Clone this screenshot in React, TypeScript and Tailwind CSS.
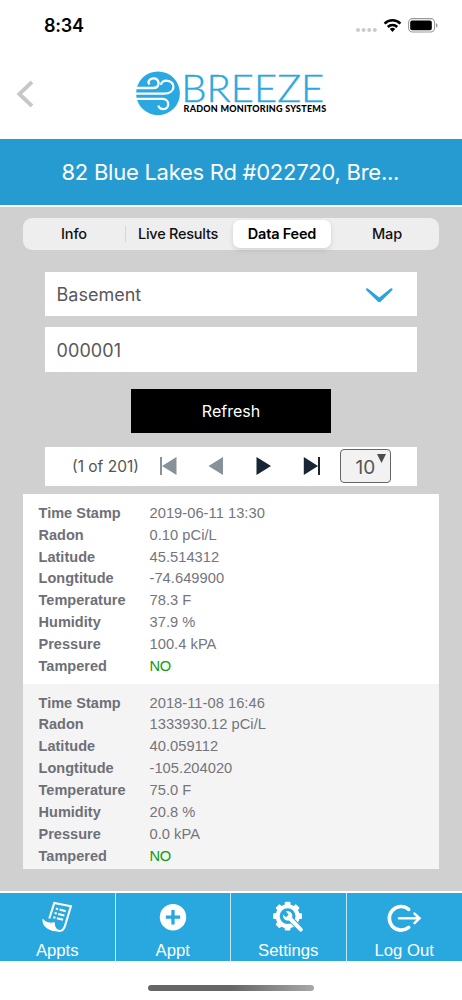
import React from "react";

type Reading = { label: string; value: string }[];

const row = (label: string, value: string) => ({ label, value });

const first: Reading = [
  row("Time Stamp", "2019-06-11 13:30"),
  row("Radon", "0.10 pCi/L"),
  row("Latitude", "45.514312"),
  row("Longtitude", "-74.649900"),
  row("Temperature", "78.3 F"),
  row("Humidity", "37.9 %"),
  row("Pressure", "100.4 kPA"),
  row("Tampered", "NO"),
];

const second: Reading = [
  row("Time Stamp", "2018-11-08 16:46"),
  row("Radon", "1333930.12 pCi/L"),
  row("Latitude", "40.059112"),
  row("Longtitude", "-105.204020"),
  row("Temperature", "75.0 F"),
  row("Humidity", "20.8 %"),
  row("Pressure", "0.0 kPA"),
  row("Tampered", "NO"),
];

function ReadingBlock({ rows, className }: { rows: Reading; className: string }) {
  return (
    <dl className={`pl-[15.5px] font-['Liberation_Sans',sans-serif] text-[14.7px] leading-[21.9px] text-[#74757c] ${className}`}>
      {rows.map((r) => (
        <div key={r.label} className="flex h-[21.9px]">
          <dt className="w-[111px] text-[14.5px] font-bold tracking-[0.03px] text-[#6e6f77]">{r.label}</dt>
          <dd className={r.value === "NO" ? "tracking-[-0.3px] text-[#0a9d0a]" : "tracking-[0.03px]"}>{r.value}</dd>
        </div>
      ))}
    </dl>
  );
}

function StatusBar() {
  return (
    <div className="flex h-[52px] justify-between pl-[44px] pr-[24px]">
      <span className="pt-[13px] text-[18px] font-semibold leading-[25px] tracking-[-0.25px] text-black">8:34</span>
      <svg className="mt-[16px] h-[18px] w-[84px]" viewBox="354 16 84 18">
        <g fill="#cbcbcd">
          <circle cx="358" cy="30" r="2" />
          <circle cx="363.6" cy="30" r="2" />
          <circle cx="369.2" cy="30" r="2" />
          <circle cx="374.8" cy="30" r="2" />
        </g>
        <g fill="none" stroke="#000" strokeWidth="2.6">
          <path d="M384.6 23.6a11 11 0 0 1 15.8 0" />
          <path d="M387.8 27a6.6 6.6 0 0 1 9.4 0" />
        </g>
        <path d="M389.8 29.1a4 4 0 0 1 5.4 0l-2.7 2.8z" />
        <rect x="408.6" y="18.6" width="26" height="13.4" rx="4" fill="none" stroke="#9a9a9a" strokeWidth="1.1" />
        <rect x="410.2" y="20.6" width="21.6" height="9.6" rx="2" />
        <path d="M436 23.2c2 .6 2 3.8 0 4.4z" fill="#9a9a9a" />
      </svg>
    </div>
  );
}

function Logo() {
  return (
    <svg className="h-[50px] w-[196px] overflow-visible" viewBox="134 68 196 50">
      <circle cx="158" cy="93.3" r="21.9" fill="#2aa8e1" />
      <g fill="none" stroke="#fff" strokeWidth="2.3">
        <path d="M136 88H153.5C158 88 159 84.6 158.500 82.2C157.6 77.8 151.4 77 149 80.600C148.200 82 148.500 83.500 149.500 84.600" />
        <path d="M136 93.6H164C176 93.600 176.500 81 166.200 80.700C163.200 80.700 161.600 82.500 160.800 84.800" />
        <path d="M136 98.8H162.500C170 99 170 108.800 163.300 109.200C160.800 109.200 159 107.800 158.300 105.700" />
      </g>
      <text x="181.3" y="102" textLength="143" lengthAdjust="spacingAndGlyphs" fill="#2aa8e1" stroke="#2aa8e1" strokeWidth=".4" fontSize="37" fontWeight="300" fontFamily="Lato, sans-serif">BREEZE</text>
      <text x="183.600" y="112.200" textLength="142.500" lengthAdjust="spacing" fontSize="9" fontWeight="900" fontFamily="Lato, sans-serif">RADON MONITORING SYSTEMS</text>
    </svg>
  );
}

function Header() {
  return (
    <header className="flex h-[87px] items-start bg-white">
      <button className="ml-[16px] mt-[28px]" aria-label="Back">
        <svg className="h-[28px] w-[18px]" viewBox="16 80 18 28">
          <path d="M32 82L19.300 94L32 106" fill="none" stroke="#c6c6cb" strokeWidth="3.800" />
        </svg>
      </button>
      <div className="ml-[100px] mt-[16px]"><Logo /></div>
    </header>
  );
}

function Tabs() {
  return (
    <div className="mx-[23px] grid h-[32px] grid-cols-4 items-center rounded-[9px] bg-[#eeeeef] text-center text-[14.5px] font-medium tracking-[-0.15px] text-[#111]">
      <span className="mr-[1px] border-r border-[#d5d5d7] leading-[16px]">Info</span>
      <span className="pr-[2px] tracking-[-0.25px]">Live Results</span>
      <span className="ml-[2px] mr-[4px] rounded-[7px] bg-white font-semibold leading-[28px] tracking-[-0.2px] text-black shadow-[0_2px_5px_rgba(0,0,0,0.12)]">Data Feed</span>
      <span>Map</span>
    </div>
  );
}

function Pager() {
  return (
    <div className="mx-[45px] mt-[13.5px] flex h-[39px] items-center bg-white text-[#545456]">
      <span className="ml-[27px] mt-[1px] w-[87px] text-[15.500px]">(1 of 201)</span>
      <svg className="h-[20px] w-[164px]" viewBox="159 456.500 164 20">
        <g fill="#87919a">
          <path d="M160 457.500h2v18h-2zM162 466.500L176.500 457.500V475.500z" />
          <path d="M208.500 466.500L223 457.500V475.500z" />
        </g>
        <g fill="#172632">
          <path d="M271 466.500L256.500 457.500V475.500z" />
          <path d="M318 466.500L303.800 457.500V475.500zM318 457.500h2v18h-2z" />
        </g>
      </svg>
      <button className="ml-[16.500px] flex h-[34.5px] w-[51.500px] rounded-[4px] border border-[#666] bg-[#f2f2f2] pl-[15px] text-[19px] leading-[35px] text-[#555]">
        10
        <svg className="ml-[2px] mt-[4.500px] h-[9px] w-[9px]" viewBox="0 0 9 9"><path d="M0 0h9L4.500 9z" fill="#4d4d4d" /></svg>
      </button>
    </div>
  );
}

function AppointmentsIcon() {
  return (
    <svg className="h-[32px] w-[32px]" viewBox="41.500 901 32 32" fill="none" stroke="#fff">
      <path d="M49.800 918.500L54.800 902.900L71.400 906.300L65.600 925.500C64.200 930.300 61.500 931.500 58.500 930.800" strokeWidth="2.100" />
      <path d="M43.500 919.600C46 923 51 923.600 54.800 922.900C54.600 926.500 56.300 929.800 60.500 930.900C52.500 931.700 43 927.500 43.500 919.600Z" fill="#fff" strokeWidth="1.200" strokeLinejoin="round" />
      <g strokeWidth="2.100">
        <path d="M56.300 908.600l2.300.6M60 909.600l6.200 1.600" />
        <path d="M55 912.900l2.300.6M58.700 913.900l6.200 1.600" />
        <path d="M53.700 917.200l2.300.6M57.400 918.200l6.200 1.600" />
      </g>
    </svg>
  );
}

function AddIcon() {
  return (
    <svg className="h-[32px] w-[32px]" viewBox="157.500 901 32 32">
      <circle cx="173.500" cy="917.200" r="13.200" fill="#fff" />
      <path d="M166.300 917.200h14.400M173.500 910v14.400" stroke="#29a7df" strokeWidth="3.300" />
    </svg>
  );
}

function SettingsIcon() {
  return (
    <svg className="h-[32px] w-[32px]" viewBox="272.500 901 32 32">
      <g fill="#fff">
        <rect x="285.200" y="901.800" width="5.800" height="28.800" rx="1" />
        <rect x="285.200" y="901.800" width="5.800" height="28.800" rx="1" transform="rotate(45 288.100 916.200)" />
        <rect x="285.200" y="901.800" width="5.800" height="28.800" rx="1" transform="rotate(90 288.100 916.200)" />
        <rect x="285.200" y="901.800" width="5.800" height="28.800" rx="1" transform="rotate(135 288.100 916.200)" />
        <circle cx="288.100" cy="916.200" r="12" />
      </g>
      <circle cx="288.100" cy="916.200" r="7.900" fill="#29a7df" />
      <path d="M293 921L303 931.300" stroke="#29a7df" strokeWidth="6" />
      <path d="M290 918L301.300 929.600" stroke="#fff" strokeWidth="4" strokeLinecap="round" />
      <path d="M286.500 911.400C290.500 910.400 293.400 913.200 292.800 916.800L289.500 920.500C286.300 921.200 283.200 918.600 283.600 914.700L286.500 917.200L289.100 914.700Z" fill="#fff" />
    </svg>
  );
}

function LogOutIcon() {
  return (
    <svg className="h-[32px] w-[36px]" viewBox="386 901 36 32" fill="none" stroke="#fff" strokeLinecap="round">
      <path d="M408.700 909.300A11.800 11.800 0 1 0 408.700 927.400" strokeWidth="3.600" />
      <path d="M399 918.300H418.800M414.500 913.700L419.500 918.300L414.500 923.200" strokeWidth="2.500" />
    </svg>
  );
}

const navItems = [
  { label: "Appts", icon: <AppointmentsIcon /> },
  { label: "Appt", icon: <AddIcon /> },
  { label: "Settings", icon: <SettingsIcon /> },
  { label: "Log Out", icon: <LogOutIcon /> },
];

export default function App() {
  return (
    <div className="h-[1000px] w-[462px] overflow-hidden bg-white font-['Inter',sans-serif]">
      <StatusBar />
      <Header />
      <div className="h-[66px] bg-[#269bd1] pl-[61.500px] text-[22px] leading-[67px] text-white">
        <span className="whitespace-nowrap tracking-[-0.26px]">82 Blue Lakes Rd #022720, Bre...</span>
      </div>
      <main className="mt-[2px] h-[684px] bg-[#d0d0d0] pt-[11px]">
        <Tabs />
        <div className="mx-[45px] mt-[21.5px] flex h-[44.5px] items-center justify-between bg-white pl-[11.5px] pr-[24px] text-[18px] text-[#58585a]">
          <span className="pt-[1px]">Basement</span>
          <svg className="h-[16px] w-[28px]" viewBox="365 286 28 16"><path d="M365.800 289.700Q366.500 287.600 368.200 288.800L379.300 297.500L390.200 288.800Q392 287.600 392.700 289.700L379.300 303Z" fill="#25a5e2" /></svg>
        </div>
        <div className="mx-[45px] mt-[11px] h-[44.5px] bg-white pl-[11.5px] text-[18px] leading-[47px] tracking-[0.1px] text-[#58585a]">000001</div>
        <button className="mx-auto mt-[17px] block h-[44.5px] w-[200px] bg-black text-[16px] leading-[44px] text-white">Refresh</button>
        <Pager />
        <div className="mx-[23px] mt-[8.5px]">
          <ReadingBlock rows={first} className="h-[189.500px] bg-white pt-[8.800px]" />
          <ReadingBlock rows={second} className="h-[185px] bg-[#f4f4f4] pt-[9px]" />
        </div>
      </main>
      <nav className="mt-[2px] grid h-[67.500px] grid-cols-4 bg-[#29a7df]">
        {navItems.map((item, i) => (
          <button key={item.label} className={`flex flex-col items-center pt-[8px] font-['Liberation_Sans',sans-serif] text-[16.700px] text-white ${i < 3 ? "border-r border-[#c5e6f6]" : ""}`}>
            {item.icon}
            <span className="mt-[7px] leading-[22px]">{item.label}</span>
          </button>
        ))}
      </nav>
      <div className="mx-auto mt-[24.500px] h-[5.500px] w-[166px] rounded-full bg-linear-to-r from-[#666] via-[#666] to-[#a8a8a8]" />
    </div>
  );
}
